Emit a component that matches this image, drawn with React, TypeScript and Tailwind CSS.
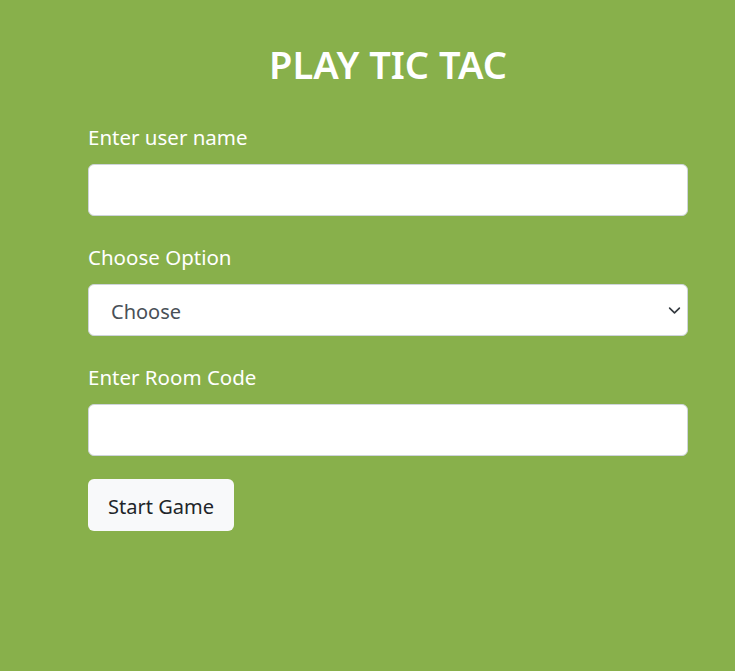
import React from "react";

const font = { fontFamily: '"Noto Sans", "Open Sans", sans-serif' };

export default function App() {
  return (
    <div className="min-h-[671px] w-full bg-[#88b04b]" style={font}>
      <div className="ml-[88px] w-[600px] pt-[38px]">
        <h1 className="text-center text-[38px] font-semibold leading-[52px] text-white">PLAY TIC TAC</h1>
        <div className="mt-[34px] flex flex-col">
          <label className="mb-[14px] text-[20.5px] leading-[26px] text-white">Enter user name</label>
          <input className="h-[52px] w-full rounded-[6px] border border-[#ced4da] bg-white px-[22px] text-[20px] outline-none" />
          <label className="mb-[14px] mt-[28px] text-[20.5px] leading-[26px] text-white">Choose Option</label>
          <div className="relative flex h-[52px] w-full items-center rounded-[6px] border border-[#ced4da] bg-white px-[22px] pt-[3px] text-[20px] text-[#495057]">
            <span>Choose</span>
            <svg className="absolute right-[6px] top-[19px]" width="13" height="13" viewBox="0 0 16 16">
              <path d="M2 5l6 6 6-6" fill="none" stroke="#343a40" strokeWidth="2" strokeLinecap="round" strokeLinejoin="round" />
            </svg>
          </div>
          <label className="mb-[14px] mt-[28px] text-[20.5px] leading-[26px] text-white">Enter Room Code</label>
          <input className="h-[52px] w-full rounded-[6px] border border-[#ced4da] bg-white px-[22px] text-[20px] outline-none" />
          <div className="mt-[23px]">
            <button className="h-[52px] w-[146px] rounded-[6px] bg-[#f8f9fa] pt-[3px] text-[20px] text-[#212529]">Start Game</button>
          </div>
        </div>
      </div>
    </div>
  );
}
